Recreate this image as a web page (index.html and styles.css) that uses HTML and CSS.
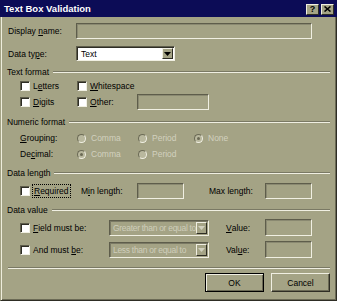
FILE: index.html
```html
<!DOCTYPE html>
<html>
<head>
<meta charset="utf-8">
<title>Text Box Validation</title>
<link rel="stylesheet" href="styles.css">
</head>
<body>
<div class="window">
  <div class="titlebar">
    <span class="title">Text Box Validation</span>
    <div class="tbtns">
      <span class="tbtn">?</span>
      <span class="tbtn"><svg width="7" height="6" viewBox="0 0 7 6"><path d="M0.5 0.5 L6.5 5.5 M6.5 0.5 L0.5 5.5" stroke="#000" stroke-width="1.6"/></svg></span>
    </div>
  </div>
  <div class="frame">
    <div class="row r-name">
      <span class="lbl c-head">Display <u>n</u>ame:</span>
      <span class="tb w-name"></span>
    </div>
    <div class="row r-type">
      <span class="lbl c-head">Data ty<u>p</u>e:</span>
      <span class="combo w-type">
        <span class="combo-text">Text</span>
        <span class="arrow"><svg width="7" height="4" viewBox="0 0 7 4"><path d="M0 0 H7 L3.5 4 Z" fill="#000"/></svg></span>
      </span>
    </div>

    <div class="group g1"><span>Text format</span><span class="gline"></span></div>
    <div class="row chk-row first">
      <span class="cell c-a"><span class="cb"></span><span class="clbl">L<u>e</u>tters</span></span>
      <span class="cell c-b"><span class="cb"></span><span class="clbl"><u>W</u>hitespace</span></span>
    </div>
    <div class="row chk-row">
      <span class="cell c-a"><span class="cb"></span><span class="clbl"><u>D</u>igits</span></span>
      <span class="cell c-b"><span class="cb"></span><span class="clbl"><u>O</u>ther:</span></span>
      <span class="tb w-other"></span>
    </div>

    <div class="group g2"><span>Numeric format</span><span class="gline"></span></div>
    <div class="row rad-row first">
      <span class="cell c-a"><u>G</u>rouping:</span>
      <span class="cell c-r1"><span class="rb"></span><span class="rlbl">Comma</span></span>
      <span class="cell c-r2"><span class="rb"></span><span class="rlbl">Period</span></span>
      <span class="cell"><span class="rb on"></span><span class="rlbl">None</span></span>
    </div>
    <div class="row rad-row">
      <span class="cell c-a">De<u>c</u>imal:</span>
      <span class="cell c-r1"><span class="rb on"></span><span class="rlbl">Comma</span></span>
      <span class="cell c-r2"><span class="rb"></span><span class="rlbl">Period</span></span>
    </div>

    <div class="group g3"><span>Data length</span><span class="gline"></span></div>
    <div class="row len-row">
      <span class="cell c-req"><span class="cb"></span><span class="focus"><u>R</u>equired</span></span>
      <span class="cell c-min">M<u>i</u>n length:</span>
      <span class="tb w-len"></span>
      <span class="cell c-max">Max length:</span>
      <span class="tb w-len"></span>
    </div>

    <div class="group g4"><span>Data value</span><span class="gline"></span></div>
    <div class="row val-row first">
      <span class="cell c-fld"><span class="cb"></span><span class="clbl"><u>F</u>ield must be:</span></span>
      <span class="combo dis w-cmp">
        <span class="combo-text tight">Greater than or equal to</span>
        <span class="arrow"><svg width="7" height="4" viewBox="0 0 7 4"><path d="M0 0 H7 L3.5 4 Z" fill="#d2d1bf"/></svg></span>
      </span>
      <span class="cell c-val"><u>V</u>alue:</span>
      <span class="tb w-val"></span>
    </div>
    <div class="row val-row second">
      <span class="cell c-fld"><span class="cb"></span><span class="clbl">And must <u>b</u>e:</span></span>
      <span class="combo dis w-cmp">
        <span class="combo-text tight">Less than or equal to</span>
        <span class="arrow"><svg width="7" height="4" viewBox="0 0 7 4"><path d="M0 0 H7 L3.5 4 Z" fill="#d2d1bf"/></svg></span>
      </span>
      <span class="cell c-val">Val<u>u</u>e:</span>
      <span class="tb w-val"></span>
    </div>

    <div class="sep"></div>
    <div class="row btn-row">
      <span class="btn default">OK</span>
      <span class="btn">Cancel</span>
    </div>
  </div>
</div>
</body>
</html>
```

FILE: styles.css
```css
* { box-sizing: border-box; }
html, body { margin: 0; padding: 0; }
body {
  width: 337px;
  height: 301px;
  overflow: hidden;
  font-family: "Liberation Sans", Arial, sans-serif;
  font-size: 8.5px;
  color: #000;
  background: #a4a385;
}
u { text-underline-offset: 1px; }

.window {
  width: 337px;
  height: 301px;
  display: flex;
  flex-direction: column;
  background: #a4a385;
}

.titlebar {
  height: 17px;
  flex: none;
  background: #0c0c56;
  display: flex;
  align-items: center;
  justify-content: space-between;
  padding: 0 3px 0 4px;
}
.title {
  color: #fff;
  font-weight: bold;
  font-size: 9.5px;
}
.tbtns { display: flex; gap: 2px; margin-top: 1px; }
.tbtn {
  width: 13px;
  height: 11px;
  background: #a4a385;
  border: 1px solid;
  border-color: #f0efe0 #2e2d24 #2e2d24 #f0efe0;
  display: flex;
  align-items: center;
  justify-content: center;
  font-weight: bold;
  font-size: 9px;
  line-height: 1;
}

.frame {
  flex: 1;
  border-left: 1px solid #a4a385;
  border-right: 1px solid #2e2d24;
  border-bottom: 1px solid #2e2d24;
  box-shadow: inset 1px 0 0 #eeeddc, inset -1px -1px 0 #6b6a55;
  padding: 0 6px 0 7px;
  display: flex;
  flex-direction: column;
}

.row { display: flex; align-items: center; flex: none; white-space: nowrap; }
.cell { display: flex; align-items: center; flex: none; }
.lbl { flex: none; }

/* text boxes (sunken, disabled look) */
.tb {
  flex: none;
  display: block;
  border: 1px solid;
  border-color: #5e5d4b #f0efe2 #f0efe2 #5e5d4b;
  box-shadow: inset 1px 1px 0 #8a8971;
  background: #a4a385;
}

/* top rows */
.r-name { margin-top: 6px; height: 16px; }
.r-type { margin-top: 7px; height: 15px; }
.c-head { width: 68px; }
.w-name { width: 236px; height: 16px; }

.combo {
  flex: none;
  height: 15px;
  display: flex;
  align-items: stretch;
  background: #fff;
  border: 1px solid;
  border-color: #5e5d4b #f0efe2 #f0efe2 #5e5d4b;
  box-shadow: inset 1px 1px 0 #2e2d24;
  padding: 1px;
  overflow: hidden;
}
.combo-text {
  flex: 1;
  overflow: hidden;
  padding-left: 3px;
  display: flex;
  align-items: center;
}
.combo-text.tight { padding-left: 2px; letter-spacing: -0.3px; }
.arrow {
  flex: none;
  width: 11px;
  background: #a4a385;
  border: 1px solid;
  border-color: #f0efe2 #2e2d24 #2e2d24 #f0efe2;
  display: flex;
  align-items: center;
  justify-content: center;
}
.w-type { width: 99px; }
.combo.dis { background: #a4a385; color: #cfcebb; box-shadow: inset 1px 1px 0 #7a7964; }
.w-cmp { width: 100px; height: 16px; }

/* group headers */
.group {
  display: flex;
  align-items: center;
  height: 11px;
  flex: none;
  margin-left: -1px;
}
.gline {
  flex: 1;
  height: 2px;
  margin-left: 4px;
  border-top: 1px solid #7a7964;
  border-bottom: 1px solid #f0efe2;
}
.g1 { margin-top: 5px; }
.g2 { margin-top: 6px; }
.g3 { margin-top: 5px; }
.g4 { margin-top: 5px; }

/* checkboxes */
.cb {
  flex: none;
  width: 10px;
  height: 10px;
  background: #fff;
  border: 1px solid;
  border-color: #5e5d4b #f0efe2 #f0efe2 #5e5d4b;
  box-shadow: inset 1px 1px 0 #2e2d24;
}
.clbl { margin-left: 3px; }

.chk-row { height: 16px; padding-left: 12px; }
.chk-row.first { margin-top: 1px; }
.c-a { width: 57px; }
.c-b { width: 60px; }
.w-other { width: 72px; height: 16px; }

/* radios */
.rad-row { height: 16px; padding-left: 12px; }
.rad-row.first { margin-top: 3px; }
.c-r1 { width: 61px; }
.c-r2 { width: 56px; }
.rb {
  flex: none;
  width: 9px;
  height: 9px;
  border-radius: 50%;
  border: 1px solid;
  border-color: #6b6a55 #f0efe2 #f0efe2 #6b6a55;
  background: #b9b89e;
  display: flex;
  align-items: center;
  justify-content: center;
}
.rb.on::after {
  content: "";
  width: 3px;
  height: 3px;
  border-radius: 50%;
  background: #6b6a55;
}
.rlbl { margin-left: 5px; color: #d2d1bf; }

/* data length */
.len-row { height: 16px; margin-top: 5px; padding-left: 12px; }
.c-req { width: 61px; }
.focus {
  margin-left: 2px;
  height: 14px;
  padding: 0 1px;
  border: 1px dotted #000;
  display: flex;
  align-items: center;
}
.c-min { width: 56px; }
.w-len { width: 47px; height: 16px; }
.c-max { width: 56px; margin-left: 25px; }

/* data value */
.val-row { height: 17px; padding-left: 12px; }
.val-row.first { margin-top: 4px; }
.val-row.second { margin-top: 5px; }
.c-fld { width: 89px; }
.c-val { width: 39px; margin-left: 17px; }
.w-val { width: 47px; height: 17px; }

/* separator + buttons */
.sep {
  flex: none;
  height: 2px;
  margin-top: 9px;
  border-top: 1px solid #7a7964;
  border-bottom: 1px solid #f0efe2;
}
.btn-row {
  height: 19px;
  margin-top: 4px;
  justify-content: flex-end;
  gap: 7px;
}
.btn {
  flex: none;
  width: 59px;
  height: 19px;
  display: flex;
  align-items: center;
  justify-content: center;
  background: #a4a385;
  border: 1px solid;
  border-color: #f0efe2 #2e2d24 #2e2d24 #f0efe2;
  box-shadow: inset -1px -1px 0 #6b6a55;
}
.btn.default {
  border-color: #000;
  box-shadow: inset 1px 1px 0 #f0efe2, inset -1px -1px 0 #6b6a55;
}
```
